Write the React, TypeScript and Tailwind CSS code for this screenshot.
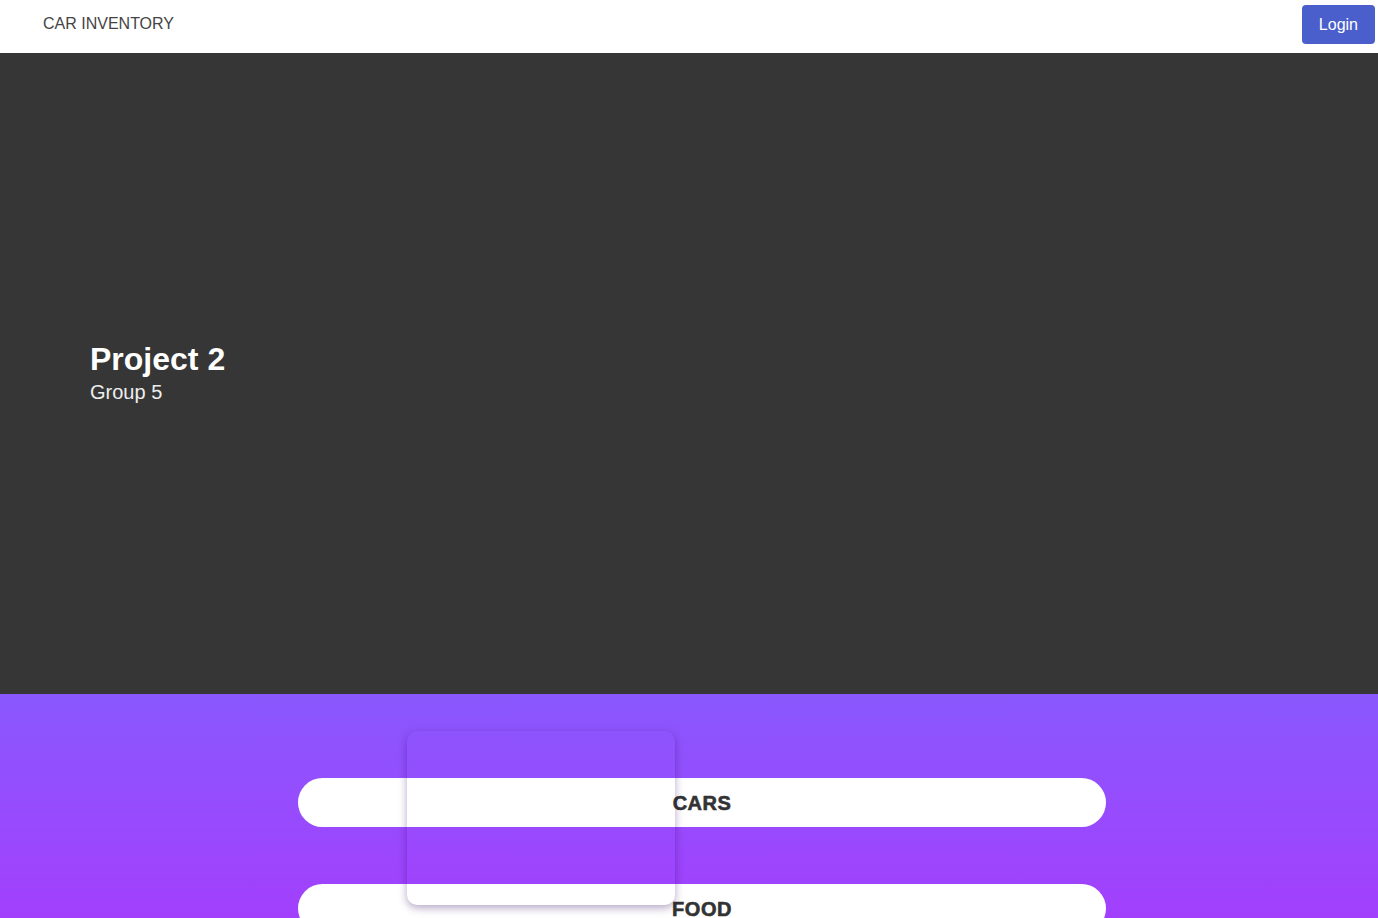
import React from 'react';

const CATEGORIES = ['CARS', 'FOOD', 'GAMES'];

export default function App() {
  return (
    <div className="min-h-screen font-['Liberation_Sans',Arial,sans-serif]">
      {/* navbar */}
      <nav className="h-[53px] bg-white flex items-center justify-between pl-[43px] pr-[3px]">
        <span className="text-[16px] text-[#444] -mt-[5px]">CAR INVENTORY</span>
        <button className="h-[39px] px-[17px] rounded-[4px] bg-[#4a5fcb] text-white text-[16px] -mt-[4px]">
          Login
        </button>
      </nav>

      {/* hero */}
      <section className="h-[641px] bg-[#363636] flex flex-col justify-center pl-[90px] pb-[2px]">
        <h1 className="text-[32px] font-bold text-white leading-[34px]">Project 2</h1>
        <p className="text-[20px] text-[#eee] leading-[24px] mt-[4px]">Group 5</p>
      </section>

      {/* categories */}
      <section className="relative bg-gradient-to-b from-[#8957fd] to-[#b41bfd] pt-[84px] pb-[60px] flex flex-col items-center gap-[57px]">
        {CATEGORIES.map(c => (
          <div
            key={c}
            className="w-[808px] h-[49px] ml-[26px] rounded-full bg-white flex items-center justify-center"
          >
            <span className="text-[20px] font-bold text-[#333] tracking-[0.5px] [-webkit-text-stroke:0.6px_#333]">
              {c}
            </span>
          </div>
        ))}
        <div className="absolute left-[407px] top-[37px] w-[268px] h-[174px] rounded-[10px] bg-transparent shadow-[0_3px_8px_rgba(40,0,90,0.35)]" />
      </section>
    </div>
  );
}
